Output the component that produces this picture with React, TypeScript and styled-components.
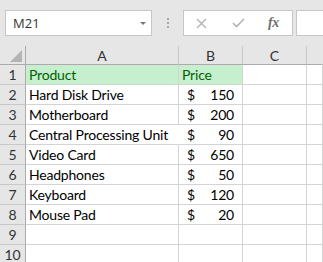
import React from "react";
import styled, { createGlobalStyle } from "styled-components";

const Global = createGlobalStyle`
  html, body { margin: 0; padding: 0; background: #ffffff; overflow: hidden; }
  body { font-family: "Lato", "Liberation Sans", sans-serif; }
`;

const Page = styled.div`
  width: 323px;
  height: 262px;
  display: flex;
  flex-direction: column;
  overflow: hidden;
`;

const Toolbar = styled.div`
  height: 46px;
  flex-shrink: 0;
  background: #e6e6e6;
  display: flex;
  align-items: flex-start;
  padding: 10px 0 0 5px;
  box-sizing: border-box;
`;

const NameBox = styled.div`
  width: 147px;
  height: 26px;
  box-sizing: border-box;
  background: #fff;
  border: 1px solid #c6c6c6;
  display: flex;
  align-items: center;
  justify-content: space-between;
  padding: 0 5px 0 7px;
  font-family: "Open Sans", "Noto Sans", sans-serif;
  font-size: 13px;
  color: #333;
`;

const Caret = styled.span`
  width: 0;
  height: 0;
  border-left: 3.5px solid transparent;
  border-right: 3.5px solid transparent;
  border-top: 3.5px solid #777;
`;

const Grip = styled.div`
  width: 31px;
  height: 26px;
  display: flex;
  flex-direction: column;
  align-items: center;
  justify-content: center;
  gap: 2px;
  span {
    width: 2px;
    height: 2px;
    background: #a6a6a6;
  }
`;

const FormulaTools = styled.div`
  width: 110px;
  height: 26px;
  box-sizing: border-box;
  background: #fff;
  border: 1px solid #c6c6c6;
  display: flex;
  align-items: center;
  padding-left: 12px;
`;

const ToolIcon = styled.div<{ $w: number }>`
  width: ${(p) => p.$w}px;
  display: flex;
  align-items: center;
  justify-content: flex-start;
`;

const Fx = styled.span`
  font-family: "Liberation Serif", serif;
  font-style: italic;
  font-weight: bold;
  font-size: 14px;
  color: #707070;
  letter-spacing: -0.5px;
`;

const FormulaInput = styled.div`
  flex: 1;
  height: 26px;
  margin-left: 3px;
  box-sizing: border-box;
  background: #fff;
  border: 1px solid #c6c6c6;
  border-right: none;
`;

const Sheet = styled.div`
  display: grid;
  grid-template-columns: 26px 153px 64px 64px 1fr;
  grid-auto-rows: 20px;
  grid-template-rows: 19px;
  font-size: 14px;
`;

const ColHead = styled.div<{ $last?: boolean }>`
  background: #e6e6e6;
  border-right: 1px solid ${(p) => (p.$last ? "transparent" : "#c8c8c8")};
  border-bottom: 1px solid #ababab;
  display: flex;
  align-items: center;
  justify-content: center;
  color: #333;
  font-size: 14px;
  box-sizing: border-box;
`;

const Corner = styled.div`
  background: #e6e6e6;
  border-right: 1px solid #ababab;
  border-bottom: 1px solid #ababab;
  box-sizing: border-box;
  display: flex;
  align-items: flex-end;
  justify-content: flex-end;
  padding: 0 3px 2px 0;
`;

const RowHead = styled.div`
  background: #e6e6e6;
  border-right: 1px solid #ababab;
  border-bottom: 1px solid #c8c8c8;
  display: flex;
  align-items: center;
  justify-content: center;
  color: #333;
  font-size: 14px;
  box-sizing: border-box;
`;

const Cell = styled.div<{ $good?: boolean; $overflow?: boolean }>`
  border-right: 1px solid ${(p) => (p.$overflow ? "transparent" : "#d4d4d4")};
  border-bottom: 1px solid #d4d4d4;
  background: ${(p) => (p.$good ? "#c6efce" : "#fff")};
  color: ${(p) => (p.$good ? "#006100" : "#000")};
  display: flex;
  align-items: center;
  padding: 0 3px;
  box-sizing: border-box;
  white-space: nowrap;
  letter-spacing: -0.2px;
  overflow: visible;
  position: relative;
  z-index: ${(p) => (p.$overflow ? 1 : 0)};
`;

const MoneyCell = styled(Cell)`
  justify-content: space-between;
  padding: 0 8px 0 8px;
`;

const rows: [string, number][] = [
  ["Hard Disk Drive", 150],
  ["Motherboard", 200],
  ["Central Processing Unit", 90],
  ["Video Card", 650],
  ["Headphones", 50],
  ["Keyboard", 120],
  ["Mouse Pad", 20],
];

export default function App() {
  return (
    <Page>
      <Global />
      <Toolbar>
        <NameBox>
          <span>M21</span>
          <Caret />
        </NameBox>
        <Grip>
          <span />
          <span />
          <span />
        </Grip>
        <FormulaTools>
          <ToolIcon $w={36}>
            <svg width="11" height="11" viewBox="0 0 11 11">
              <path d="M1 1 L10 10 M10 1 L1 10" stroke="#b4b4b4" strokeWidth="1.4" fill="none" />
            </svg>
          </ToolIcon>
          <ToolIcon $w={36}>
            <svg width="13" height="10" viewBox="0 0 13 10">
              <path d="M1 5 L4.5 8.5 L12 1" stroke="#b4b4b4" strokeWidth="1.6" fill="none" />
            </svg>
          </ToolIcon>
          <ToolIcon $w={20}>
            <Fx>fx</Fx>
          </ToolIcon>
        </FormulaTools>
        <FormulaInput />
      </Toolbar>
      <Sheet>
        <Corner>
          <svg width="12" height="12" viewBox="0 0 12 12">
            <path d="M12 0 L12 12 L0 12 Z" fill="#b4b4b4" />
          </svg>
        </Corner>
        <ColHead>A</ColHead>
        <ColHead>B</ColHead>
        <ColHead>C</ColHead>
        <ColHead $last />

        <RowHead>1</RowHead>
        <Cell $good>Product</Cell>
        <Cell $good>Price</Cell>
        <Cell />
        <Cell />

        {rows.map(([name, price], i) => (
          <React.Fragment key={name}>
            <RowHead>{i + 2}</RowHead>
            <Cell $overflow={name.length > 20}>{name}</Cell>
            <MoneyCell>
              <span>$</span>
              <span>{price}</span>
            </MoneyCell>
            <Cell />
            <Cell />
          </React.Fragment>
        ))}

        {[9, 10].map((n) => (
          <React.Fragment key={n}>
            <RowHead>{n}</RowHead>
            <Cell />
            <Cell />
            <Cell />
            <Cell />
          </React.Fragment>
        ))}
      </Sheet>
    </Page>
  );
}
